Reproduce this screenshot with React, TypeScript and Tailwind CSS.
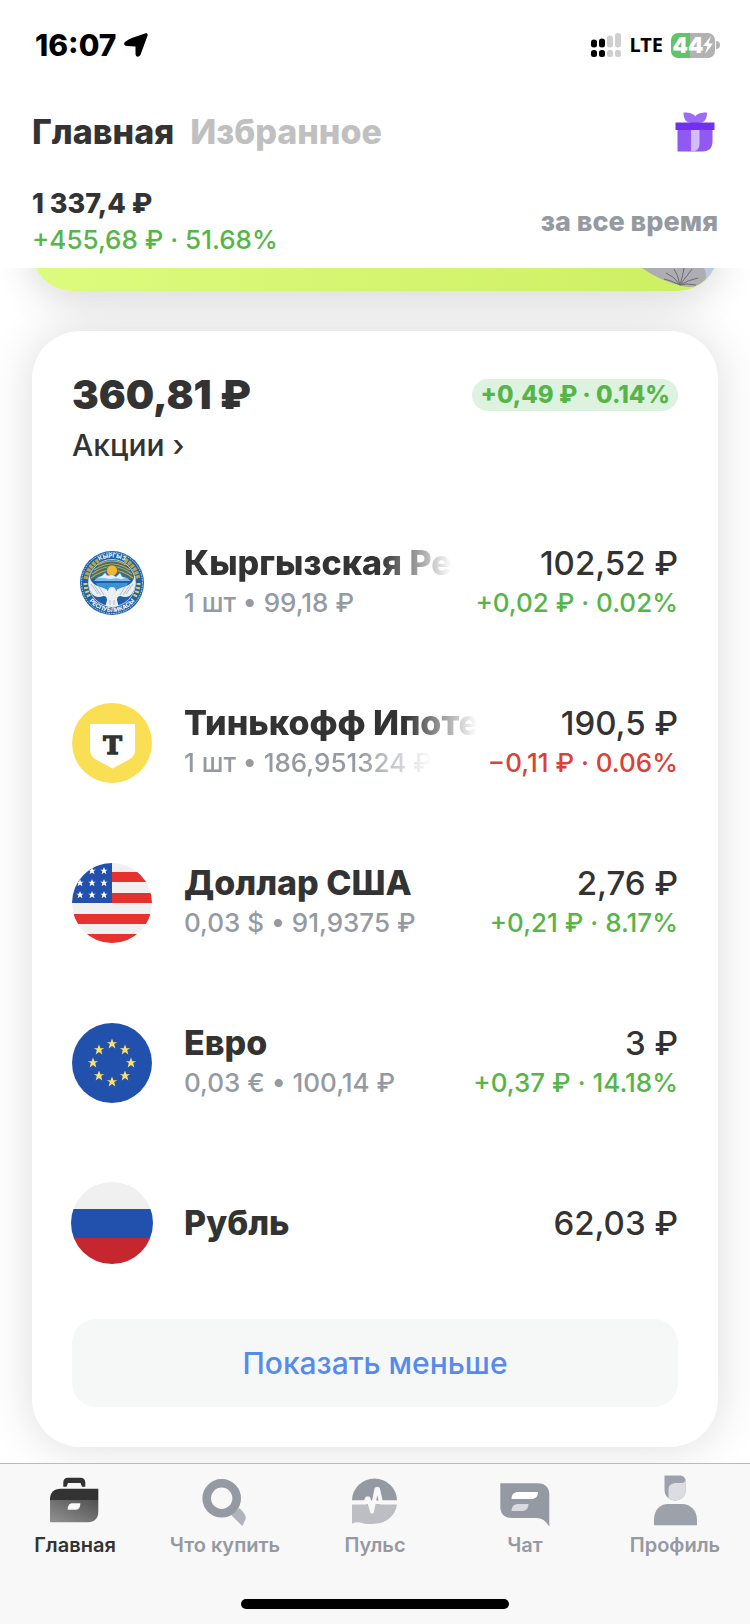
import type { ReactNode } from "react";

const STAR = "M0-5 1.3-1.6 4.8-1.5 2-.1 3 4.1 0 1.8-3 4.1-2-.1-4.8-1.5-1.3-1.6Z";

const KyrgyzLogo = () => (
  <svg viewBox="0 0 80 80" className="size-20">
    <defs>
      <path id="kg-top" d="M14.500 40a25.500 25.500 0 0 1 51 0" />
      <path id="kg-bottom" d="M11 40a29 29 0 0 0 58 0" />
    </defs>
    <circle cx="40" cy="40" r="32" fill="#1f62a8" />
    <circle cx="40" cy="40" r="30.500" fill="none" stroke="#c9dcec" strokeWidth="1" strokeDasharray="1.500 1" />
    <path
      d="M14 36A26.500 26.500 0 0 1 27 17M53 17A26.500 26.500 0 0 1 66 36"
      fill="none"
      stroke="#b9a545"
      strokeWidth="4.500"
      strokeDasharray="3 1"
    />
    <path
      d="M13.500 40a26.500 26.500 0 0 0 4 14M66.500 40a26.500 26.500 0 0 1-4 14"
      fill="none"
      stroke="#d9d36a"
      strokeWidth="4"
      strokeDasharray="2 2"
    />
    <circle cx="40" cy="40" r="23.500" fill="#1f5fa6" stroke="#dfe9f1" strokeWidth=".8" />
    <path d="M18 36a22.500 22.500 0 0 1 44 0Z" fill="#3f6f78" />
    <g fill="none" stroke="#c8a93c" strokeWidth="1.200">
      <path d="M22 27q18-12 36 0M26 22q14-8 28 0M20 31q20-15 40 0M19 35q21-16 42 0" />
    </g>
    <circle cx="40" cy="27.500" r="5.500" fill="#f5b52c" stroke="#1f5fa6" strokeWidth=".6" />
    <path d="m22 38 4-4 4-1 3-3 4 3 3-2 4 3 4-3 3 3 4 1 4 3Z" fill="#78bdec" />
    <path d="m26 35 4-2 3-3 2 3 5-1 4 2 4-4 2 4 4 1-5 1-5-1-6 1-6-1Z" fill="#e3f0f9" />
    <path d="M24 40h32l-3 7H27Z" fill="#3a93d6" />
    <path
      d="M17.500 33c1 6 5 9 9 10.500 5 1.500 8 2 9.500 4.500.5-2.500 1.500-4 4-4s3.500 1.500 4 4c1.500-2.500 4.500-3 9.500-4.500 4-1.500 8-4.500 9-10.500 2 8 0 17-5 20-3 1.500-6 1-9 0-2.500 0-3.500 1.500-3.500 4l1.500 6q-6.500 2-13 0l1.500-6c0-2.500-1-4-3.500-4-3 1-6 1.500-9 0-5-3-7-12-5-20Z"
      fill="#eceef0"
    />
    <path
      d="m19 41 7 10m-4-9 7 10m-2-8 5 8m29-11-7 10m4-9-7 10m2-8-5 8M38 57v5m4-5v5"
      stroke="#9fb0c0"
      strokeWidth=".8"
    />
    <g fill="#fff" fontFamily="Inter, sans-serif" fontWeight="700" fontSize="6" textAnchor="middle">
      <text>
        <textPath href="#kg-top" startOffset="50%">
          КЫРГЫЗ
        </textPath>
      </text>
      <text>
        <textPath href="#kg-bottom" startOffset="50%">
          РЕСПУБЛИКАСЫ
        </textPath>
      </text>
    </g>
  </svg>
);

const TinkoffLogo = () => (
  <svg viewBox="0 0 80 80" className="size-20">
    <circle cx="40" cy="40" r="40" fill="#fadf55" />
    <path d="M18 21h45v26c0 4-2 7-5 9L40.500 65.500 23 56c-3-2-5-5-5-9Z" fill="#fff" />
    <text
      x="40.500"
      y="51"
      textAnchor="middle"
      fontFamily="DejaVu Serif, serif"
      fontWeight="700"
      fontSize="25"
      fill="#333"
      stroke="#333"
      strokeWidth="1.500"
    >
      Т
    </text>
  </svg>
);

const UsaFlag = () => (
  <svg viewBox="0 0 80 80" className="size-20">
    <clipPath id="usa">
      <circle cx="40" cy="40" r="40" />
    </clipPath>
    <g clipPath="url(#usa)">
      <path d="M0 0h80v80H0Z" fill="#f0f0f0" />
      <path d="M40 9h40v10H40ZM40 30h40v10H40ZM0 51h80v10H0ZM0 71h80v9H0Z" fill="#e7312f" />
      <path d="M0 0h40v40H0Z" fill="#2150ad" />
      <g fill="#fff">
        {[8, 20, 32].map((x) =>
          [8, 20, 32].map((y) => <path key={x + "-" + y} d={STAR} transform={`translate(${x} ${y}) scale(.8)`} />),
        )}
      </g>
    </g>
  </svg>
);

const EuroFlag = () => (
  <svg viewBox="0 0 80 80" className="size-20">
    <circle cx="40" cy="40" r="40" fill="#2150ad" />
    <g fill="#fbe06a">
      {[
        [40, 21],
        [53, 27],
        [59, 40],
        [53, 53],
        [40, 59],
        [27, 53],
        [21, 40],
        [27, 27],
      ].map(([x, y]) => (
        <path key={x + "-" + y} d={STAR} transform={`translate(${x} ${y}) scale(1.100)`} />
      ))}
    </g>
  </svg>
);

const RussiaFlag = () => (
  <svg viewBox="0 0 80 80" className="size-20 overflow-visible">
    <clipPath id="rus">
      <circle cx="40" cy="40" r="41" />
    </clipPath>
    <g clipPath="url(#rus)">
      <path d="M-1-1h82v27H-1Z" fill="#f0f0f0" />
      <path d="M-1 26h82v29H-1Z" fill="#2150ad" />
      <path d="M-1 55h82v27H-1Z" fill="#c6262d" />
    </g>
  </svg>
);

const BriefcaseIcon = () => (
  <svg viewBox="0 0 52 52" className="size-13">
    <linearGradient id="case" x1="0" y1="1" x2="1" y2="0">
      <stop offset="0" stopColor="#929292" />
      <stop offset="1" stopColor="#505050" />
    </linearGradient>
    <path d="M14.300 11.700V7.500c0-3 1.700-4.800 4.700-4.800h12.500c3 0 4.800 1.800 4.800 4.800v4.200H33L31.500 8H19l-1.500 3.700Z" fill="#333" />
    <path d="M1 25v-1c0-6.500 4-10.300 10.500-10.300h37.800V25Z" fill="#333" />
    <path
      d="M1 25h48.300v12c0 6.500-4 10.300-10.300 10.300H1Zm17.700 9.700h8.500c2.500 0 4.100-2 4.100-6.400h-8c-2.500 0-4.600 2-4.600 6.400Z"
      fill="url(#case)"
      fillRule="evenodd"
    />
  </svg>
);

const SearchIcon = () => (
  <svg viewBox="0 0 52 52" className="size-13">
    <path d="m32 40 8-7c6 5 7.500 9 6.500 11.500L43.300 51Z" fill="#b0b3b9" />
    <circle cx="22.700" cy="23.300" r="15" fill="none" stroke="#9599a1" strokeWidth="8.600" />
  </svg>
);

const PulseIcon = () => (
  <svg viewBox="0 0 52 52" className="size-13">
    <path d="M3 25.500a22.500 22 0 0 1 45 0Z" fill="#9599a1" />
    <path d="M3 29v19.700q5-2.500 10-.7c4 1.400 9 1 13 .7A22 22 0 0 0 48 29Z" fill="#bcbec4" />
    <path
      d="M2 27.500h14.500l1.500-4h1.500l3.500 13 4.500-22.500h1.500l3 13.500H49"
      fill="none"
      stroke="#f8f8f8"
      strokeWidth="4"
      strokeLinejoin="round"
    />
  </svg>
);

const ChatIcon = () => (
  <svg viewBox="0 0 52 52" className="size-13">
    <path d="M1.300 8.300H39c7 0 11.300 4 11.300 11v32.500C47 46 43.500 43 37 43H13C5.500 43 1.300 39 1.300 31.500Z" fill="#9599a1" />
    <path d="M12.500 24c0-4.500 2.500-7 7-7H39c0 4.500-2.500 7-7 7Z" fill="#fff" />
    <path d="M12.500 36c0-4.500 2.500-7 7-7h10c0 4.500-2.500 7-7 7Z" fill="#d9dade" />
  </svg>
);

const ProfileIcon = () => (
  <svg viewBox="0 0 52 52" className="size-13">
    <path d="M15.500.5h15c4 0 6.300 2.500 6.300 6.500v8c0 6-5 10.500-10.700 10.500S15.500 21 15.500 15Z" fill="#9da1a9" />
    <path d="M19.500 23V15c0-5 3-7 8-7h5c2.500 0 4-1.500 4.300-4v11c0 6-5 10.500-10.700 10.500-2.600 0-5-1-6.600-2.500Z" fill="#dcdde0" />
    <path d="M5 50.300V45c0-10 6-16 14-16h14c8 0 15 6 15 16v5.300Z" fill="#9da1a9" />
  </svg>
);

const GiftIcon = () => (
  <svg viewBox="0 0 40 40" className="size-10">
    <path d="M8.500.5C15 .5 19 2 20.300 4.500 21.500 2 25.500.5 32 .5c0 7-3 10.500-8 10.500h-7.500c-5 0-8-3.500-8-10.500Z" fill="#9b6cf5" />
    <path d="M2.500 17h35v12.500c0 6.500-3.500 10-10 10h-25Z" fill="#9259f2" />
    <path d="M16 17h8.500v14c0 5-2 8.500-8.500 8.500Z" fill="#d4bcfa" />
    <path d="M.5 10.500h39V18H.5Z" fill="#7230ee" />
  </svg>
);

type Asset = {
  icon: ReactNode;
  name: string;
  amount: string;
  details?: string;
  change?: string;
  isDown?: boolean;
  fadeName?: boolean;
  fadeDetails?: boolean;
};

const assets: Asset[] = [
  {
    icon: <KyrgyzLogo />,
    name: "Кыргызская Ре",
    amount: "102,52 ₽",
    details: "1 шт • 99,18 ₽",
    change: "+0,02 ₽ · 0.02%",
    fadeName: true,
  },
  {
    icon: <TinkoffLogo />,
    name: "Тинькофф Ипоте",
    amount: "190,5 ₽",
    details: "1 шт • 186,951324 ₽",
    change: "−0,11 ₽ · 0.06%",
    isDown: true,
    fadeName: true,
    fadeDetails: true,
  },
  {
    icon: <UsaFlag />,
    name: "Доллар США",
    amount: "2,76 ₽",
    details: "0,03 $ • 91,9375 ₽",
    change: "+0,21 ₽ · 8.17%",
  },
  {
    icon: <EuroFlag />,
    name: "Евро",
    amount: "3 ₽",
    details: "0,03 € • 100,14 ₽",
    change: "+0,37 ₽ · 14.18%",
  },
  { icon: <RussiaFlag />, name: "Рубль", amount: "62,03 ₽" },
];

const navItems = [
  { label: "Главная", icon: <BriefcaseIcon /> },
  { label: "Что купить", icon: <SearchIcon /> },
  { label: "Пульс", icon: <PulseIcon /> },
  { label: "Чат", icon: <ChatIcon /> },
  { label: "Профиль", icon: <ProfileIcon /> },
];

const FADE = "[mask-image:linear-gradient(to_left,transparent,black_72px)]";

const StatusBar = () => (
  <div className="flex items-center justify-between h-[90px] pl-[35px] pr-[30px]">
    <div className="flex items-center gap-2">
      <span className="text-[30px] leading-8 font-extrabold text-black">16:07</span>
      <svg viewBox="0 0 24 24" className="size-6">
        <path d="M21 .4c2-.7 3.200.5 2.500 2.400L16.800 21c-1.500 4-5.300 3.500-5.300-.5V13.500L3 13C-.5 12.800-.8 9.800 2 8.300Q5 6 8.500 4.800Z" />
      </svg>
    </div>

    <div className="flex items-center gap-2">
      <svg viewBox="0 0 30 24" className="w-[30px] h-6">
        <path d="M0 9q0-2.500 3-2.500t3 2.500v3q0 2.500-3 2.500T0 12ZM8 8q0-2.500 3-2.500T14 8v4q0 2.500-3 2.500T8 12Z" />
        <path d="M16 5q0-2.500 3-2.500T22 5v7q0 2.500-3 2.500T16 12ZM24 2.500Q24 0 27 0t3 2.500V12q0 2.500-3 2.500T24 12Z" fill="#cfcfcf" />
        <rect y="17" width="6" height="7" rx="2.500" />
        <rect x="8" y="17" width="6" height="7" rx="2.500" />
        <rect x="16" y="17" width="6" height="7" rx="2.500" fill="#cfcfcf" />
        <rect x="24" y="17" width="6" height="7" rx="2.500" fill="#cfcfcf" />
      </svg>
      <span className="font-['Noto_Sans'] text-[20px] leading-6 font-bold text-black">LTE</span>
      <div className="flex items-center gap-px">
        <div className="flex items-center justify-center w-11 h-[25px] rounded-[7px] bg-linear-to-r from-[#62c466] from-44% to-[#b2b2b2] to-44% text-white">
          <span className="text-[22px] leading-6 font-black">44</span>
          <svg viewBox="0 0 10 18" className="w-[10px] h-[18px]" fill="currentColor">
            <path d="M8 0 0 10h4.500L2 18l8-10.500H5.500Z" />
          </svg>
        </div>
        <div className="w-1 h-2 rounded-r-full bg-[#b2b2b2]" />
      </div>
    </div>
  </div>
);

const AssetRow = ({ asset }: { asset: Asset }) => (
  <li className="flex items-center gap-8 h-40">
    <div className="shrink-0">{asset.icon}</div>
    <div className="flex-1 min-w-0">
      <div className="flex justify-between gap-[84px] leading-10 whitespace-nowrap">
        <span className={`min-w-0 text-[34px] font-extrabold ${asset.fadeName ? FADE : ""}`}>{asset.name}</span>
        <span className="text-[33px] font-medium">{asset.amount}</span>
      </div>
      {asset.details && (
        <div className="flex justify-between gap-12 text-[26px] leading-10 font-medium whitespace-nowrap">
          <span className={`min-w-0 text-[#9599a1] ${asset.fadeDetails ? FADE : ""}`}>{asset.details}</span>
          <span className={asset.isDown ? "text-[#dc4037]" : "text-[#56b548]"}>{asset.change}</span>
        </div>
      )}
    </div>
  </li>
);

const App = () => {
  return (
    <div className="flex flex-col min-h-screen bg-white font-[Inter,sans-serif] text-[#333]">
      <header className="relative z-10 bg-white">
        <StatusBar />

        <div className="flex items-center justify-between h-[84px] pl-8 pr-[35px]">
          <div className="flex gap-4 text-[34px] leading-10 font-extrabold">
            <button>Главная</button>
            <button className="text-[#c0c0c0]">Избранное</button>
          </div>
          <button aria-label="Подарки">
            <GiftIcon />
          </button>
        </div>

        <div className="flex items-center justify-between h-[94px] px-8 pt-[2px] leading-9">
          <div>
            <p className="text-[27px] font-extrabold">1 337,4 ₽</p>
            <p className="text-[26px] font-medium text-[#56b548]">+455,68 ₽ · 51.68%</p>
          </div>
          <button className="text-[27px] font-extrabold text-[#9599a1]">за все время</button>
        </div>
      </header>

      <main className="flex-1 px-8 pb-4 overflow-hidden">
        {/* the promo card is scrolled most of the way under the header */}
        <div className="flex items-end justify-end h-[103px] -mt-20 rounded-[40px] overflow-hidden bg-linear-to-r from-[#ddfb7e] to-[#cdef62] shadow-[0_8px_40px_rgba(0,0,0,0.16)]">
          <svg viewBox="0 0 80 23" className="w-20 h-[23px]">
            <path d="M4 0h72Q68 14 58 18q-6 2-14 0Q22 13 4 0Z" fill="#aeaeb2" />
            <path d="M66 0h12q-4 10-12 15 4-7 0-15Z" fill="#b9cbe2" />
            <path
              d="M42 17Q36 8 28 5m14 12Q40 7 36 1m6 16Q45 7 46 0m-4 17q6-8 12-16M42 17q8-5 18-7M42 17q6-2 16 0M42 17Q32 12 26 11"
              fill="none"
              stroke="#6b6b70"
              strokeWidth="1"
            />
          </svg>
        </div>

        <section className="mt-10 px-10 pb-10 rounded-[48px] bg-white shadow-[0_0_48px_rgba(0,0,0,0.14)]">
          <div className="flex items-start justify-between h-[172px] pt-10">
            <div>
              <h1 className="text-[40px] leading-12 font-black">360,81 ₽</h1>
              <a href="#stocks" className="block mt-[6px] text-[30px] leading-10 font-medium">
                Акции ›
              </a>
            </div>
            <span className="mt-2 px-2 rounded-full bg-[#ddf2df] text-[24px] leading-8 font-extrabold text-[#56b548]">
              +0,49 ₽ · 0.14%
            </span>
          </div>

          <ul>
            {assets.map((asset) => (
              <AssetRow key={asset.name} asset={asset} />
            ))}
          </ul>

          <button className="w-full h-[88px] mt-4 rounded-3xl bg-[#f6f8f8] text-[30px] leading-10 font-medium text-[#568aed]">
            Показать меньше
          </button>
        </section>
      </main>

      <nav className="relative z-10 border-t border-[#bababc] bg-[#f8f8f8] pt-[11px] pb-4">
        <div className="grid grid-cols-5 text-[20px] leading-7 font-semibold text-[#9599a1]">
          {navItems.map((item, idx) => (
            <a key={item.label} href="#" className={`flex flex-col items-center gap-1 ${idx === 0 ? "text-[#333]" : ""}`}>
              {item.icon}
              <span>{item.label}</span>
            </a>
          ))}
        </div>
        <div className="w-[268px] h-[10px] mt-10 mx-auto rounded-full bg-black" />
      </nav>
    </div>
  );
};

export default App;
